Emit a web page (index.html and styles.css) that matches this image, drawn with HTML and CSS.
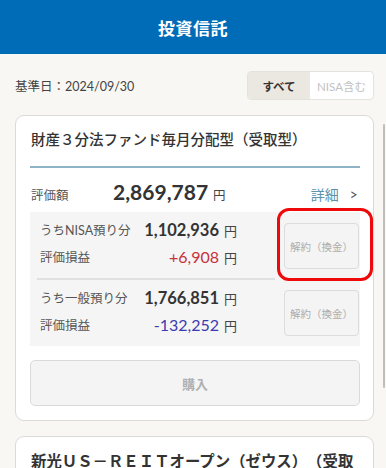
FILE: index.html
```html
<!DOCTYPE html>
<html lang="ja">
<head>
<meta charset="utf-8">
<title>投資信託</title>
<link rel="stylesheet" href="styles.css">
</head>
<body>
<header class="topbar">
  <h1 class="topbar-title">投資信託</h1>
</header>

<div class="date-row">
  <span class="base-date">基準日：2024/09/30</span>
  <div class="toggle">
    <span class="seg seg-active">すべて</span>
    <span class="seg">NISA含む</span>
  </div>
</div>

<section class="card">
  <h2 class="card-title">財産３分法ファンド毎月分配型（受取型）</h2>
  <div class="total-row">
    <span class="label total-label">評価額</span>
    <span class="total-value">2,869,787</span><span class="yen total-yen">円</span>
    <a class="detail">詳細<span class="chev">&gt;</span></a>
  </div>

  <div class="holds">
    <div class="hold">
      <div class="hold-info hold-info-first">
        <div class="line">
          <span class="label">うちNISA預り分</span>
          <span class="amount"><b class="num">1,102,936</b><span class="yen">円</span></span>
        </div>
        <div class="line">
          <span class="label">評価損益</span>
          <span class="amount"><span class="pl plus">+6,908</span><span class="yen">円</span></span>
        </div>
      </div>
      <button class="sell">解約（換金）</button>
    </div>
    <div class="hold">
      <div class="hold-info">
        <div class="line">
          <span class="label">うち一般預り分</span>
          <span class="amount"><b class="num">1,766,851</b><span class="yen">円</span></span>
        </div>
        <div class="line">
          <span class="label">評価損益</span>
          <span class="amount"><span class="pl minus">-132,252</span><span class="yen">円</span></span>
        </div>
      </div>
      <button class="sell">解約（換金）</button>
    </div>
  </div>

  <button class="buy">購入</button>

  <div class="highlight"></div>
</section>

<section class="card">
  <h2 class="card-title card-title-bold">新光ＵＳ－ＲＥＩＴオープン（ゼウス）（受取型）</h2>
</section>

<div class="scroll-indicator"></div>
</body>
</html>
```

FILE: styles.css
```css
* { box-sizing: border-box; }

html, body {
  margin: 0;
  padding: 0;
}

body {
  background: #f8f7f3;
  font-family: Lato, "Noto Sans CJK JP", sans-serif;
  color: #333;
  overflow: hidden;
  width: 386px;
  text-spacing-trim: space-all;
}

.topbar {
  height: 54px;
  background: #006bb6;
  display: flex;
  align-items: center;
  justify-content: center;
}

.topbar-title {
  margin: 0;
  color: #fff;
  font-size: 17px;
  font-weight: 700;
  letter-spacing: 0.5px;
}

.date-row {
  display: flex;
  align-items: center;
  justify-content: space-between;
  padding: 17px 12px 15px 15px;
}

.base-date {
  font-size: 12.5px;
  color: #444;
}

.toggle {
  display: flex;
  height: 29px;
  border: 1px solid #e6e3dd;
  border-radius: 4px;
  overflow: hidden;
  background: #fff;
}

.seg {
  display: flex;
  align-items: center;
  justify-content: center;
  width: 63px;
  font-size: 11.5px;
  color: #c2c2c2;
}

.seg-active {
  width: 62px;
  background: #ebe7e1;
  color: #333;
  font-weight: 700;
}

.card {
  position: relative;
  margin: 0 12px 15px 15px;
  background: #fff;
  border: 1px solid #dcdad6;
  border-radius: 9px;
  padding: 0 13px 14px 14px;
}

.card-title {
  margin: 0;
  padding: 13px 0 15px 1px;
  font-size: 14.5px;
  line-height: 22px;
  font-weight: 500;
  color: #333;
  border-bottom: 2px solid #8db4c6;
}

.card-title-bold {
  font-size: 15.4px;
  font-weight: 700;
  border-bottom: none;
}

.total-row {
  display: flex;
  align-items: baseline;
  height: 44px;
  padding: 11px 2px 0 1px;
}

.label {
  font-size: 12.5px;
  color: #555;
}

.total-label {
  width: 82px;
}

.total-value {
  font-size: 21px;
  font-weight: 700;
  color: #333;
}

.yen {
  font-size: 13px;
  color: #444;
  margin-left: 5px;
}

.total-yen {
  font-size: 12.5px;
}

.detail {
  margin-left: auto;
  font-size: 14px;
  color: #5b91ab;
  display: flex;
  align-items: baseline;
}

.chev {
  color: #555;
  margin-left: 10px;
  font-size: 16px;
  transform: scaleX(0.85);
}

.holds {
  background: #f5f5f5;
}

.hold {
  display: flex;
  align-items: center;
  padding: 0 1px 0 7px;
}

.hold-info {
  width: 238px;
  padding: 4px 38px 8px 3px;
}

.hold-info-first {
  border-bottom: 2px solid #e0e0e0;
}

.line {
  display: flex;
  align-items: center;
  justify-content: space-between;
  height: 27px;
}

.amount {
  display: flex;
  align-items: baseline;
}

.num {
  font-size: 16.5px;
  font-weight: 700;
  color: #333;
}

.pl {
  font-size: 16px;
}

.plus { color: #c4333c; }
.minus { color: #3b3bb0; }

.sell {
  margin-left: auto;
  width: 75px;
  height: 46px;
  padding: 0;
  background: #f4f4f4;
  border: 1px solid #dcdcdc;
  border-radius: 4px;
  font-family: inherit;
  font-size: 10.5px;
  color: #adadad;
}

.buy {
  display: block;
  width: 100%;
  height: 46px;
  margin-top: 14px;
  background: #f4f4f4;
  border: 1px solid #dadada;
  border-radius: 5px;
  font-family: inherit;
  font-size: 13px;
  font-weight: 700;
  color: #b0b0b0;
}

.highlight {
  position: absolute;
  left: 261px;
  top: 92px;
  width: 96px;
  height: 73px;
  border: 3.5px solid #ee0a0a;
  border-radius: 12px;
  pointer-events: none;
}

.scroll-indicator {
  position: fixed;
  left: 383px;
  top: 124px;
  width: 2px;
  height: 264px;
  background: #bdbdbd;
  border-radius: 1px;
}
```
